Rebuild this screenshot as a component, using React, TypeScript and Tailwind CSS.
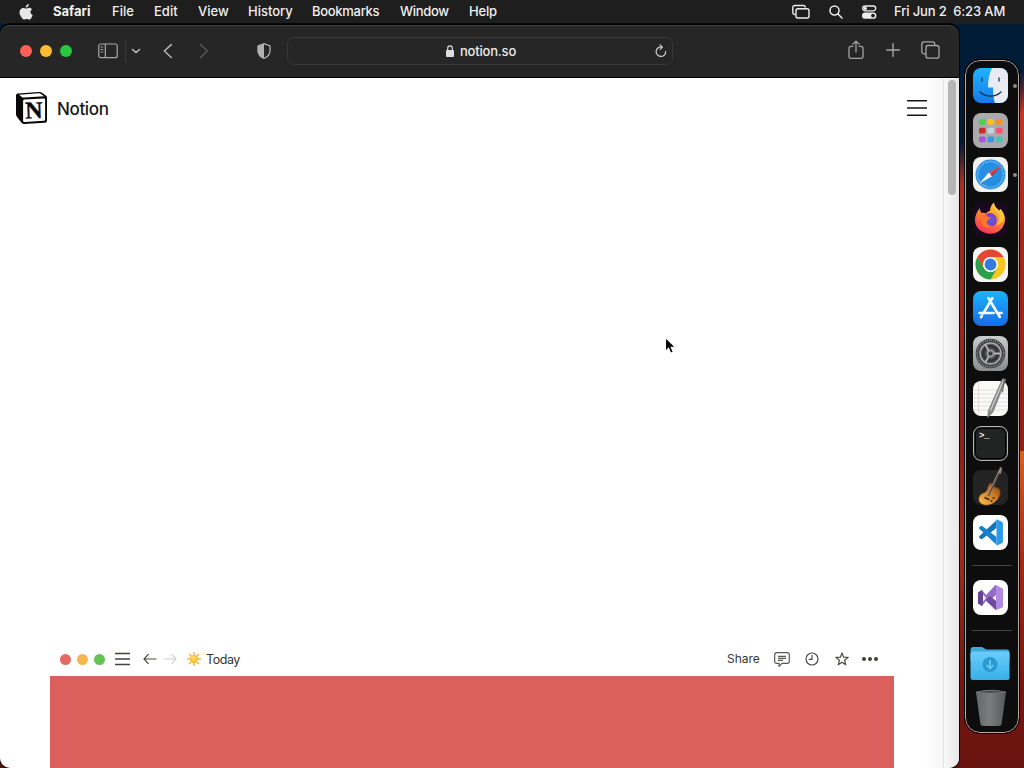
import React from "react";

const menus = [
  { label: "File", cls: "w-[42px]" },
  { label: "Edit", cls: "w-[44px]" },
  { label: "View", cls: "w-[50px]" },
  { label: "History", cls: "w-[64px]" },
  { label: "Bookmarks", cls: "w-[88px] tracking-[-0.3px]" },
  { label: "Window", cls: "w-[69px] tracking-[-0.3px]" },
  { label: "Help", cls: "w-[40px] tracking-[-0.2px]" },
];

function MenuBar() {
  return (
    <header className="flex h-6 w-full shrink-0 items-center bg-[#1e1e1e] pb-px text-[13px] leading-[23px] font-medium whitespace-nowrap text-[#f0f0f0]">
      <svg className="ml-[19px] h-4 w-[14px] shrink-0" viewBox="0 0 14 16" fill="#e6e6e6">
        <path d="M9.800 0c.1 1-.3 1.900-.9 2.600-.6.700-1.400 1.100-2.200 1-.1-.9.300-1.800.9-2.400C8.200.500 9.100.100 9.800 0ZM13 5.400c-.9.600-1.500 1.500-1.500 2.700 0 1.400.8 2.500 2.200 3-.3 1-.8 1.900-1.400 2.800-.6.900-1.200 1.600-2.200 1.600-.9 0-1.300-.5-2.500-.5s-1.500.5-2.500.5-1.700-.8-2.300-1.700C1.500 12.200.5 10.500.5 8.500c0-3 1.900-4.600 3.700-4.600 1.100 0 1.900.7 2.900.7.800 0 1.800-.8 3.100-.8 1.200 0 2.200.6 2.800 1.600Z" />
      </svg>
      <span className="ml-5 w-[59px] shrink-0 text-[13px] font-bold">Safari</span>
      {menus.map((m) => (
        <span key={m.label} className={`shrink-0 ${m.cls}`}>
          {m.label}
        </span>
      ))}
      <svg className="ml-auto h-4 w-[18px] shrink-0" viewBox="0 0 18 16" fill="none" stroke="#ededed" strokeWidth="1.400">
        <path d="M3.500 10.500h-.7A2 2 0 0 1 .8 8.500v-5a2 2 0 0 1 2-2h8.500a2 2 0 0 1 2 2" />
        <rect x="4" y="4.700" width="13" height="9.300" rx="2" />
      </svg>
      <svg className="ml-[18px] h-4 w-4 shrink-0" viewBox="0 0 16 16" fill="none" stroke="#ededed" strokeWidth="1.500" strokeLinecap="round">
        <circle cx="6.500" cy="6.500" r="4.500" />
        <path d="m10 10 4 4" />
      </svg>
      <svg className="ml-[17px] h-4 w-4 shrink-0" viewBox="0 0 16 16">
        <rect x="1.700" y="2" width="13" height="4.800" rx="2.400" fill="none" stroke="#ededed" strokeWidth="1.300" />
        <circle cx="4.300" cy="4.400" r="1.600" fill="#ededed" />
        <rect x="1" y="8.500" width="14.400" height="6.300" rx="3.150" fill="#ededed" />
        <circle cx="12" cy="11.600" r="1.900" fill="#1e1e1e" />
      </svg>
      <span className="ml-[17px] w-[130px] shrink-0 tracking-[-0.14px] whitespace-pre">Fri Jun 2  6:23 AM</span>
    </header>
  );
}

function Toolbar() {
  return (
    <div className="flex h-[53px] w-full shrink-0 items-center rounded-t-[10px] border-t border-b border-t-[#414141] border-b-black bg-[#262626] pb-[2px] text-[#b0b0b0]">
      <div className="ml-5 flex shrink-0 gap-2">
        <i className="size-3 rounded-full bg-[#ff5f57]" />
        <i className="size-3 rounded-full bg-[#febc2e]" />
        <i className="size-3 rounded-full bg-[#28c840]" />
      </div>
      <svg className="ml-[26px] h-4 w-5 shrink-0" viewBox="0 0 20 16" fill="none" stroke="#a8a8a8" strokeWidth="1.200">
        <rect x=".8" y="1" width="18.400" height="13.700" rx="2" />
        <path d="M7.300 1v13.700M2.700 4h2.500M2.700 6.500h2.500M2.700 9h2.500" />
      </svg>
      <span className="ml-[7px] h-[22px] w-px shrink-0 bg-[#383838]" />
      <svg className="ml-[5px] h-3 w-[10px] shrink-0" viewBox="0 0 10 12" fill="none" stroke="#c0c0c0" strokeWidth="1.500" strokeLinecap="round">
        <path d="m1.500 4.500 3.500 3 3.500-3" />
      </svg>
      <svg className="ml-[22px] h-4 w-[10px] shrink-0" viewBox="0 0 10 16" fill="none" stroke="#b5b5b5" strokeWidth="1.500" strokeLinecap="round">
        <path d="M8.300 1.600 1.400 8l6.900 6.500" />
      </svg>
      <svg className="ml-[26px] h-4 w-[10px] shrink-0" viewBox="0 0 10 16" fill="none" stroke="#5b5b5b" strokeWidth="1.400" strokeLinecap="round">
        <path d="M1.500 1.600 8.400 8l-6.900 6.500" />
      </svg>
      <svg className="ml-[47px] h-[18px] w-4 shrink-0" viewBox="0 0 16 18">
        <path d="m8 1.700 6 2.200v5c0 3.500-2.300 5.700-6 7.400-3.700-1.700-6-3.900-6-7.400v-5Z" fill="none" stroke="#b0b0b0" strokeWidth="1.300" />
        <path d="M8 1.700v14.600c-3.700-1.700-6-3.900-6-7.400v-5Z" fill="#b0b0b0" />
      </svg>
      <div className="ml-[15px] flex h-7 w-[386px] shrink-0 items-center rounded-[7px] border border-[#383838] text-[#e9e9e9]">
        <svg className="ml-[158px] h-3 w-2 shrink-0" viewBox="0 0 8 12">
          <rect y="5" width="8" height="7" rx="1" fill="#dedede" />
          <path d="M1.700 5V3.200a2.300 2.300 0 0 1 4.600 0V5" fill="none" stroke="#dedede" strokeWidth="1.200" />
        </svg>
        <span className="ml-[6px] text-[13px] leading-6 font-medium tracking-[-0.2px]">notion.so</span>
        <svg className="mr-[5px] ml-auto h-[14px] w-3 shrink-0" viewBox="0 0 12 14" fill="none" stroke="#d2d2d2" strokeWidth="1.200" strokeLinecap="round" strokeLinejoin="round">
          <path d="M10.700 7.500A4.800 4.800 0 1 1 7 3M5 .900 7.400 3.100 5.200 5.300" />
        </svg>
      </div>
      <svg className="mb-[2px] ml-[175px] h-5 w-4 shrink-0" viewBox="0 0 16 20" fill="none" stroke="#a2a2a2" strokeWidth="1.300" strokeLinecap="round" strokeLinejoin="round">
        <path d="M5 6.300H3a2 2 0 0 0-2 2v8a2 2 0 0 0 2 2h10a2 2 0 0 0 2-2v-8a2 2 0 0 0-2-2h-2M8 12V1.200M5 4l3-2.900L11 4" />
      </svg>
      <svg className="mb-px ml-[22px] h-[14px] w-[14px] shrink-0" viewBox="0 0 14 14" stroke="#a8a8a8" strokeWidth="1.400" strokeLinecap="round">
        <path d="M7 .7v12.600M.7 7h12.600" />
      </svg>
      <svg className="mb-px ml-[21px] h-[18px] w-[19px] shrink-0" viewBox="0 0 19 18" fill="none" stroke="#a5a5a5" strokeWidth="1.300">
        <path d="M5 12.800H3a2.200 2.200 0 0 1-2.200-2.200V3A2.200 2.200 0 0 1 3 .8h8.500A2.200 2.200 0 0 1 13.700 3v1.500" />
        <rect x="5" y="4.500" width="13" height="12.700" rx="2.200" />
      </svg>
    </div>
  );
}

function DemoBar() {
  return (
    <div className="flex h-[34px] w-full items-center pl-[10px] text-[#37352f]">
      <div className="flex shrink-0 gap-[6px]">
        <i className="size-[11px] rounded-full bg-[#e46b64]" />
        <i className="size-[11px] rounded-full bg-[#f4b64e]" />
        <i className="size-[11px] rounded-full bg-[#62c354]" />
      </div>
      <svg className="ml-[10px] h-[14px] w-[15px] shrink-0" viewBox="0 0 15 14" stroke="#454340" strokeWidth="1.500">
        <path d="M0 1.500h15M0 7h15M0 12.500h15" />
      </svg>
      <svg className="ml-[13px] h-3 w-[14px] shrink-0" viewBox="0 0 14 12" fill="none" stroke="#4c4a46" strokeWidth="1.200">
        <path d="M13.500 6H1M5.500 1.200 1 6l4.500 4.800" />
      </svg>
      <svg className="ml-[6px] h-3 w-[14px] shrink-0" viewBox="0 0 14 12" fill="none" stroke="#cfcfcd" strokeWidth="1.200">
        <path d="M.5 6H13M8.500 1.200 13 6l-4.500 4.800" />
      </svg>
      <svg className="ml-[10px] h-[14px] w-[14px] shrink-0" viewBox="0 0 14 14">
        <path d="M7 0v14M0 7h14M2 2l10 10M12 2 2 12" stroke="#f3b94d" strokeWidth="1.500" />
        <circle cx="7" cy="7" r="4.200" fill="#fbc33c" />
        <circle cx="6.500" cy="6" r="2.400" fill="#ffd95a" />
      </svg>
      <span className="ml-[5px] pt-px text-[12.500px] leading-5 tracking-[-0.450px]">Today</span>
      <span className="ml-auto w-[33px] text-[12px] leading-5 tracking-[-0.05px]">Share</span>
      <svg className="ml-[14px] h-[15px] w-4 shrink-0" viewBox="0 0 16 15" fill="none" stroke="#5a5854" strokeWidth="1.200" strokeLinejoin="round">
        <path d="M2.500.7h11a1.800 1.800 0 0 1 1.800 1.800v7a1.800 1.800 0 0 1-1.800 1.800H8l-2.900 3v-3H2.500A1.800 1.800 0 0 1 .7 9.500v-7A1.800 1.800 0 0 1 2.500.7ZM4 4.300h8M4 6.300h8M4 8.300h5" />
      </svg>
      <svg className="ml-[15px] h-[14px] w-[14px] shrink-0" viewBox="0 0 14 14" fill="none" stroke="#4c4a47" strokeWidth="1.200">
        <circle cx="7" cy="7" r="6" />
        <path d="M7 3v4.300H3.800" />
      </svg>
      <svg className="ml-[16px] h-[14px] w-[14px] shrink-0" viewBox="0 0 14 14" fill="none" stroke="#4c4a47" strokeWidth="1.200" strokeLinejoin="round">
        <path d="m7 .9 1.600 4.300 4.600.2L9.600 8.300l1.200 4.500L7 10.200l-3.800 2.600 1.200-4.500L.8 5.400l4.600-.2Z" />
      </svg>
      <svg className="mr-[16px] ml-[13px] h-[6px] w-4 shrink-0" viewBox="0 0 16 6" fill="#403e3b">
        <circle cx="2" cy="3" r="2" />
        <circle cx="8" cy="3" r="2" />
        <circle cx="14" cy="3" r="2" />
      </svg>
    </div>
  );
}

function NotionPage() {
  return (
    <div className="flex min-h-0 flex-1 overflow-hidden rounded-b-[10px] bg-white">
      <div className="flex min-w-0 flex-1 flex-col bg-[linear-gradient(90deg,transparent_925px,#f6f6f6_944px)]">
        <div className="flex h-[60px] shrink-0 items-center pl-4">
          <svg className="h-8 w-[31px] shrink-0" viewBox="0 0 31 32">
            <path d="M2 1.500 23 0q2-.1 3.400 1l3.700 2.700q.9.700.9 2v22.700q0 2.100-2.200 2.300L8 32q-1.500.1-2.500-1.200L1 25q-1-1.300-1-2.900V3.300Q0 1.700 2 1.500Z" fill="#080808" />
            <path d="m3 2.700 20-1.400q1-.1 2 .7l3 2.200L8 5.500q-1.200.1-2.100-.6L3 2.700Z" fill="#fff" />
            <path d="m8.200 7.600 19.700-1.200q1.200-.1 1.200 1.100v20q0 1.200-1.200 1.300L8.400 30q-1.300.1-1.300-1.200V8.900q0-1.200 1.100-1.300Z" fill="#fff" />
            <text x="17.800" y="26.300" textAnchor="middle" transform="rotate(-2 18 18)" className="font-['Liberation_Serif',serif] text-[24px] font-bold" fill="#080808" stroke="#080808" strokeWidth=".4">N</text>
          </svg>
          <span className="ml-[10px] pt-[2px] text-[17px] leading-6 font-medium tracking-[-0.35px] text-[#171717]">Notion</span>
          <svg className="mr-[16px] ml-auto h-[18px] w-5 shrink-0" viewBox="0 0 20 18" stroke="#171717" strokeWidth="1.500">
            <path d="M0 1.700h20M0 9h20M0 16.300h20" />
          </svg>
        </div>
        <div className="mt-auto ml-[50px] flex h-[126px] w-[844px] shrink-0 flex-col">
          <DemoBar />
          <div className="flex-1 border-t border-t-[#cf6561] bg-[#db605d]" />
        </div>
      </div>
      <div className="flex w-4 shrink-0 justify-center border-l border-[#e5e5e5] bg-linear-to-r from-[#f8f8f8] to-[#e7e7e7] pt-[2px]">
        <div className="h-[115px] w-2 rounded-full bg-[#b5b5b5]" />
      </div>
    </div>
  );
}

const tile = "h-[35px] w-[35px] shrink-0 overflow-visible";

function Finder() {
  return (
    <svg className={tile} viewBox="0 0 35 35">
      <defs>
        <linearGradient id="finderBlue" x2="0" y2="1"><stop stopColor="#21b3fb" /><stop offset="1" stopColor="#157bed" /></linearGradient>
        <clipPath id="finderClip"><rect width="35" height="35" rx="8" /></clipPath>
      </defs>
      <g clipPath="url(#finderClip)">
        <rect width="35" height="35" fill="url(#finderBlue)" />
        <path d="M19 0c-3 6-4 12-4 19.500h5c-.2 5 .3 10 2 15.500h13V0Z" fill="#e8ebf3" />
        <path d="M9 10v3M26 10v3M7 24c6 5.500 15 5.500 21 0" fill="none" stroke="#19334f" strokeWidth="1.300" strokeLinecap="round" />
      </g>
    </svg>
  );
}

const pads = ["#4ad345", "#ffc212", "#f49522", "#c72c2d", "#c3d5da", "#fb4d71", "#a455db", "#3895eb", "#4bc1b2"];

function Launchpad() {
  return (
    <svg className={tile} viewBox="0 0 35 35">
      <rect width="35" height="35" rx="8" fill="#aaa9ad" />
      {pads.map((c, i) => (
        <rect key={c} x={6 + (i % 3) * 8.500} y={6 + Math.floor(i / 3) * 8.700} width="6.500" height="5.800" rx="1.500" fill={c} />
      ))}
    </svg>
  );
}

function SafariIcon() {
  return (
    <svg className={tile} viewBox="0 0 35 35">
      <rect width="35" height="35" rx="8" fill="#f1f1f2" />
      <circle cx="17.500" cy="17.500" r="15" fill="#258ee3" />
      <circle cx="17.500" cy="17.500" r="13" fill="none" stroke="#b9e0fa" strokeWidth="2" strokeDasharray=".6 1.440" />
      <path d="M28.500 8.500 19.200 19.300 15.700 15.500Z" fill="#ef4c45" />
      <path d="M6.500 26.500 15.700 15.500l3.500 3.800Z" fill="#f4f5f7" />
      <path d="m17.500 17.500 11-9-9.300 10.800Z" fill="#a63c43" />
    </svg>
  );
}

function Firefox() {
  return (
    <svg className={tile} viewBox="0 0 35 35">
      <defs>
        <linearGradient id="foxFire" x1=".8" y1="0" x2=".3" y2="1"><stop stopColor="#ffe047" /><stop offset=".4" stopColor="#ff9b29" /><stop offset="1" stopColor="#f52f5b" /></linearGradient>
        <radialGradient id="foxBlue"><stop stopColor="#4e69dc" /><stop offset="1" stopColor="#8637c9" /></radialGradient>
      </defs>
      <rect width="35" height="35" rx="8" fill="#19091e" />
      <path d="M7 6c-.1 2 .3 3.500 1.500 5 1.600-.4 3.200-.2 4.500.6 1-1.400 2.300-2.400 4-2.800.3-3.500 1.300-6 4-8.300 0 4 2.700 5.500 5.300 8.400l1-2c4.200 4.200 5.700 9 4.200 14-1.800 6.400-7.200 10.800-14.200 10.800C8.500 31.700 2 25.700 2 18.300 2 13.500 3.900 9.500 7 6Z" fill="url(#foxFire)" />
      <circle cx="17" cy="18" r="6.900" fill="url(#foxBlue)" />
      <path d="M7 12.500c4-1.700 7 .2 7.500 2.500l3 .2c-.4 2-2.600 2-3.400 4-1.200 3.200 2.500 5.500 6 4-3.600 4.200-11 2.400-12-3Z" fill="#ff762b" />
      <path d="M21 .5c-1 4 1.400 6 3.300 9 3 4.500 2.500 10.500-1 13.800 5.500-1.500 8-5.600 7.400-10-.5-2.500-1.700-4.800-3.400-6.400l-1 2C23.700 6 21 4.500 21 .5Z" fill="#ffcb3e" />
    </svg>
  );
}

function Chrome() {
  return (
    <svg className={tile} viewBox="0 0 35 35">
      <rect width="35" height="35" rx="8" fill="#f5f5f4" />
      <circle cx="17.500" cy="17.500" r="15" fill="#fac722" />
      <path d="M4.510 10A15 15 0 0 1 30.490 10H17.500a7.500 7.500 0 0 0-6.500 11.250Z" fill="#e64635" />
      <path d="M4.510 10A15 15 0 0 0 17.500 32.500L24 21.250a7.500 7.500 0 0 1-13 0Z" fill="#2ba14d" />
      <circle cx="17.500" cy="17.500" r="7.500" fill="#fff" />
      <circle cx="17.500" cy="17.500" r="5.900" fill="#347be4" />
    </svg>
  );
}

function AppStore() {
  return (
    <svg className={tile} viewBox="0 0 35 35">
      <defs><linearGradient id="storeBlue" x2="0" y2="1"><stop stopColor="#1bb4f9" /><stop offset="1" stopColor="#166bea" /></linearGradient></defs>
      <rect width="35" height="35" rx="8" fill="url(#storeBlue)" />
      <path d="m15.400 7 11.400 19M19.400 7l-9.200 15.500M6.500 22h14.200M24.800 22h3.800M8.800 24.900 8 26.200" fill="none" stroke="#f4f9ff" strokeWidth="2.600" strokeLinecap="round" />
    </svg>
  );
}

function Settings() {
  return (
    <svg className={tile} viewBox="0 0 35 35">
      <defs><linearGradient id="settingsGray" x2="0" y2="1"><stop stopColor="#c8cdcd" /><stop offset="1" stopColor="#898d90" /></linearGradient></defs>
      <rect width="35" height="35" rx="8" fill="url(#settingsGray)" />
      <circle cx="17.500" cy="17.500" r="14.800" fill="#3d3f41" />
      <circle cx="17.500" cy="17.500" r="13.300" fill="none" stroke="#8b8f90" strokeWidth="1.400" strokeDasharray="1.100 .99" />
      <circle cx="17.500" cy="17.500" r="10.500" fill="#505355" stroke="#a9adaf" strokeWidth="1.500" />
      <circle cx="17.500" cy="17.500" r="7.200" fill="none" stroke="#303234" strokeWidth="2.400" />
      <path d="M17.500 17.500h10.200M17.500 17.500l-5.100-8.800M17.500 17.500l-5.100 8.800" stroke="#b3b6b7" strokeWidth="1.800" />
      <circle cx="17.500" cy="17.500" r="3" fill="#393b3e" stroke="#a8abad" strokeWidth="1.400" />
    </svg>
  );
}

function TextEdit() {
  return (
    <svg className={tile} viewBox="0 0 35 35">
      <rect width="35" height="35" rx="8" fill="#f9f9f8" />
      <path d="M0 9h35M0 13h35M0 17h35M0 21h35M0 25h35M0 29h35" stroke="#d2d4d5" strokeWidth=".7" />
      <path d="M5.500 1v33" stroke="#dfcaca" strokeWidth=".6" />
      <path d="M29.500-2.500 33-1.600 20 31l-5.500 6 .9-7.500Z" fill="#89888a" stroke="#666" strokeWidth=".5" />
      <path d="M30.500-1 17.500 29.500" stroke="#d1d1d1" strokeWidth="1.200" />
      <path d="m31-.5-1.500 12" stroke="#555" />
    </svg>
  );
}

function Terminal() {
  return (
    <div className="h-[35px] w-[35px] shrink-0 rounded-[8px] border-[1.500px] border-[#b3b5b4] bg-[#202423] pt-[3px] pl-[5px] font-['Liberation_Mono',monospace] text-[9px] leading-[12px] font-bold tracking-[-0.3px] text-[#eeeeee] outline-1 -outline-offset-3 outline-black">
      &gt;_
    </div>
  );
}

function GarageBand() {
  return (
    <svg className={tile} viewBox="0 0 35 35">
      <defs><linearGradient id="guitar" x1="0" y1="1" x2="1" y2="0"><stop stopColor="#ffc34d" /><stop offset=".6" stopColor="#c77824" /><stop offset="1" stopColor="#6c351e" /></linearGradient></defs>
      <rect width="35" height="35" rx="8" fill="#232324" />
      <path d="M16 14.500c1.200-2.400 3.800-1.600 3.300.4-.4 1.400.7 1.800 2.500 2 4.500.4 6.700 3.500 5.200 8.100-2.300 7-9 10.800-14.700 10.200C6.500 34.700 4 30 6.800 25.500c2.200-3.300 5.500-2 6.800-5 1-2.200.9-3.600 2.400-6Z" fill="url(#guitar)" stroke="#4e2a18" strokeWidth=".7" />
      <path d="m15 26 11.500-25" stroke="#8d8078" strokeWidth="2.200" />
      <path d="m15.500 26 11.500-25" stroke="#3a2b25" strokeWidth=".8" />
      <path d="m25.300 2.500 1.500-5 1.700-.5.500 2-1.300 5Z" fill="#938b85" />
      <path d="m11.500 27.500 5 2.200" stroke="#3d2921" strokeWidth="1.600" />
      <circle cx="20.500" cy="28" r="1" fill="#392519" />
      <circle cx="18.500" cy="31" r="1" fill="#392519" />
    </svg>
  );
}

function VSCode() {
  return (
    <svg className={tile} viewBox="0 0 35 35">
      <rect width="35" height="35" rx="8" fill="#fff" />
      <path d="m23.500 5.200-17.200 16q-.8.800 0 1.600l1.500 1.300q.7.500 1.400 0L23.500 13Z" fill="#1674bc" />
      <path d="m23.500 29.800-17.200-16q-.8-.8 0-1.600l1.500-1.300q.7-.5 1.400 0L23.500 22Z" fill="#1683cf" />
      <path d="M22.500 30.200q1 .3 2 0l4.300-2q1.100-.7 1.100-2V8.800q0-1.300-1.100-2l-4.300-2q-1-.5-2 .4 1-.3 1 .9v22.800q0 1.300-1 1.300Z" fill="#2a9bea" />
    </svg>
  );
}

function VisualStudio() {
  return (
    <svg className={tile} viewBox="0 0 35 35">
      <rect width="35" height="35" rx="8" fill="#fff" />
      <path d="M22.500 5 13 15 9 10l-4 2.500v11L9 26l4-5 9.500 9 7.500-3V9Z" fill="#936bc7" />
      <path d="M10 14.500v7l3-3.500Zm13 .5v6l-3.500-3Z" fill="#fff" />
      <path d="m5 12.500 4-2.500 1 4.500v7L9 26l-4-2.500Z" fill="#664293" />
      <path d="M23 5.200 30 9v18l-7 3Z" fill="#b28ae3" />
      <path d="M23 21v8.800L13 20.300l3.500-4.600Z" fill="#70499f" />
    </svg>
  );
}

function Downloads() {
  return (
    <svg className="h-[35px] w-10 shrink-0" viewBox="0 0 40 35">
      <defs><linearGradient id="folderBlue" x2="0" y2="1"><stop stopColor="#6bcdfb" /><stop offset="1" stopColor="#38b0e9" /></linearGradient></defs>
      <path d="M.5 4Q.5 1 3.500 1h8q1.500 0 3 1.500 1.200 1 3 1H37q2.500 0 2.500 3V15H.5Z" fill="#3fa9dc" />
      <path d="M.5 8q0-2.500 2.500-2.500h34q2.500 0 2.500 2.500v23.500q0 2.500-2.500 2.500H3Q.5 34 .5 31.500Z" fill="url(#folderBlue)" />
      <circle cx="20" cy="18.500" r="7.500" fill="#279bd0" />
      <path d="M20 14v8M16.500 19 20 22.500l3.500-3.500" fill="none" stroke="#6bcbf4" strokeWidth="1.700" />
    </svg>
  );
}

function Trash() {
  return (
    <svg className="h-[38px] w-8 shrink-0" viewBox="0 0 32 38">
      <defs><linearGradient id="trashGlass" x2="1" y2="0"><stop stopColor="#656769" /><stop offset=".45" stopColor="#7a7c7e" /><stop offset="1" stopColor="#56585a" /></linearGradient></defs>
      <path d="M1 3Q16-1 31 3l-4.300 31.500Q26.300 37 23 37H9q-3.300 0-3.700-2.500Z" fill="url(#trashGlass)" />
      <path d="M1 3.200Q16-.8 31 3.200 16 5.500 1 3.200Z" fill="#4b4d4f" stroke="#808284" strokeWidth=".6" />
    </svg>
  );
}

function Dock() {
  return (
    <aside className="mt-[36px] ml-[6px] flex h-[673px] w-[54px] shrink-0 flex-col items-center rounded-[15px] border border-[#b9aaa0] bg-[#0d0d0d] pt-[7px] pr-[3px] outline-1 outline-black">
      <div className="flex flex-col items-center gap-[9.700px]">
        <div className="relative flex"><Finder /><i className="absolute top-4 left-10 size-1 rounded-full bg-[#8b8b8b]" /></div>
        <Launchpad />
        <div className="relative flex"><SafariIcon /><i className="absolute top-4 left-10 size-1 rounded-full bg-[#8b8b8b]" /></div>
        <Firefox />
        <Chrome />
        <AppStore />
        <Settings />
        <TextEdit />
        <Terminal />
        <GarageBand />
        <VSCode />
      </div>
      <span className="mt-[15px] mb-[14px] ml-[3px] h-px w-10 shrink-0 bg-[#454545]" />
      <VisualStudio />
      <span className="mt-[15px] mb-[15px] ml-[3px] h-px w-10 shrink-0 bg-[#454545]" />
      <div className="mr-px flex"><Downloads /></div>
      <div className="mt-2 flex"><Trash /></div>
    </aside>
  );
}

export default function App() {
  return (
    <div className="relative flex h-[768px] w-[1024px] flex-col overflow-hidden bg-[linear-gradient(180deg,#001b36_0%,#001b36_15%,#5a110c_100%)] font-['Inter','Noto_Sans',sans-serif]">
      <MenuBar />
      <div className="flex min-h-0 flex-1">
        <div className="z-10 flex w-[959px] shrink-0 flex-col rounded-[10px] border-t border-t-black shadow-[0_0_0_1px_#080808]">
          <Toolbar />
          <NotionPage />
        </div>
        <div className="flex min-w-0 flex-1 bg-[linear-gradient(130deg,#001c36_78px,#4c2330_90px,transparent_106px),linear-gradient(180deg,#d96224,#d9622400),linear-gradient(180deg,#d8432c_0px,#a52a1b_200px,#8e2016_420px,#a72c18_520px,#75170f_660px,#68130e_744px)] bg-[size:65px_300px,6px_110px,65px_744px] bg-[position:0_0,right_427px,0_0] bg-no-repeat">
          <Dock />
        </div>
      </div>
      <svg className="pointer-events-none absolute top-[336px] left-[664px] z-20 h-[20px] w-[13px]" viewBox="0 0 13 20">
        <path d="M1.500 1.500v13.800l3.100-3 2.100 4.900 2.600-1.100-2.100-4.800h4.400Z" fill="#000" stroke="#fff" strokeWidth="1.100" />
      </svg>
    </div>
  );
}
